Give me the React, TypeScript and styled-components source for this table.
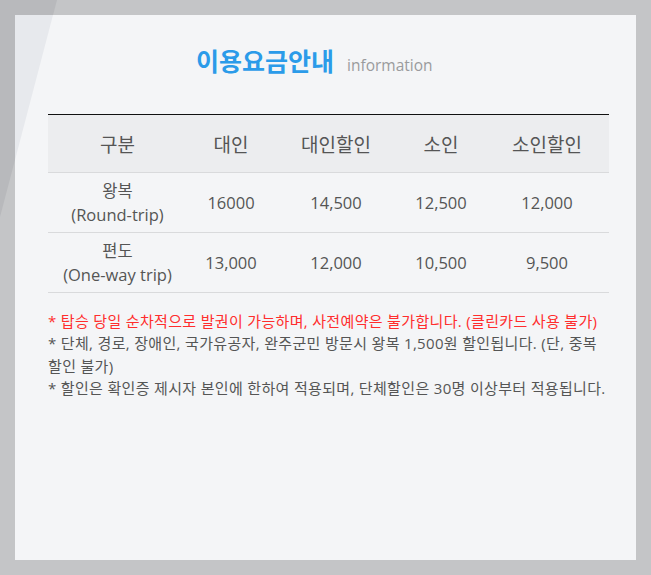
import React from "react";
import styled, { createGlobalStyle } from "styled-components";

const Global = createGlobalStyle`
  html, body { margin: 0; padding: 0; }
  body {
    background: #c4c5c7;
    font-family: "Open Sans", "Noto Sans CJK KR", sans-serif;
  }
`;

const Page = styled.div`
  position: relative;
  width: 651px;
  height: 575px;
  padding: 15px;
  box-sizing: border-box;
  background: #c4c5c7;

  &::before {
    content: "";
    position: absolute;
    left: 0;
    top: 0;
    width: 60px;
    height: 220px;
    background: #b8b9bc;
    clip-path: polygon(0 0, 57px 0, 0 217px);
  }
`;

const Card = styled.section`
  position: relative;
  width: 621px;
  height: 545px;
  background: #f4f5f7;
  box-sizing: border-box;
  padding: 28px 28px 0 33px;

  &::before {
    content: "";
    position: absolute;
    left: 0;
    top: 0;
    width: 40px;
    height: 146px;
    background: #e7e9ed;
    clip-path: polygon(0 0, 38px 0, 0 145px);
  }
`;

const TitleRow = styled.h2`
  margin: 0 0 32px 148px;
  display: flex;
  align-items: baseline;
  gap: 13px;
  font-weight: normal;
  line-height: 34px;
`;

const MainTitle = styled.span`
  font-family: "Noto Sans CJK KR", sans-serif;
  font-size: 25px;
  font-weight: 700;
  color: #2b9be9;
`;

const SubTitle = styled.span`
  font-size: 15.5px;
  color: #9a9b9d;
`;

const Table = styled.table`
  width: 561px;
  border-collapse: collapse;
  table-layout: fixed;
  border-top: 1px solid #111;
`;

const HeadCell = styled.th<{ $w: number }>`
  width: ${(p) => p.$w}px;
  height: 57px;
  padding: 0;
  background: #ecedef;
  border-bottom: 1px solid #d9dadc;
  font-weight: normal;
  font-size: 19px;
  color: #555;
  text-align: center;
  vertical-align: middle;
`;

const Cell = styled.td`
  height: 59px;
  padding: 0;
  border-bottom: 1px solid #d9dadc;
  font-size: 16.5px;
  line-height: 24px;
  color: #555;
  text-align: center;
  vertical-align: middle;
`;

const Notes = styled.ul`
  list-style: none;
  margin: 17px 0 0;
  padding: 0;
  width: 562px;
  font-size: 15px;
  letter-spacing: 0.33px;
  line-height: 22.3px;
  color: #555;
  word-break: keep-all;
`;

const Note = styled.li<{ $red?: boolean }>`
  color: ${(p) => (p.$red ? "#ff2d2d" : "#555")};
`;

const cols = [
  { label: "구분", w: 139 },
  { label: "대인", w: 88 },
  { label: "대인할인", w: 122 },
  { label: "소인", w: 88 },
  { label: "소인할인", w: 124 },
];

const rows = [
  { kind: "왕복", en: "(Round-trip)", vals: ["16000", "14,500", "12,500", "12,000"] },
  { kind: "편도", en: "(One-way trip)", vals: ["13,000", "12,000", "10,500", "9,500"] },
];

export default function App() {
  return (
    <>
      <Global />
      <Page>
        <Card>
          <TitleRow>
            <MainTitle>이용요금안내</MainTitle>
            <SubTitle>information</SubTitle>
          </TitleRow>
          <Table>
            <thead>
              <tr>
                {cols.map((c) => (
                  <HeadCell key={c.label} $w={c.w}>
                    {c.label}
                  </HeadCell>
                ))}
              </tr>
            </thead>
            <tbody>
              {rows.map((r) => (
                <tr key={r.kind}>
                  <Cell>
                    {r.kind}
                    <br />
                    {r.en}
                  </Cell>
                  {r.vals.map((v, i) => (
                    <Cell key={i}>{v}</Cell>
                  ))}
                </tr>
              ))}
            </tbody>
          </Table>
          <Notes>
            <Note $red>* 탑승 당일 순차적으로 발권이 가능하며, 사전예약은 불가합니다. (클린카드 사용 불가)</Note>
            <Note>* 단체, 경로, 장애인, 국가유공자, 완주군민 방문시 왕복 1,500원 할인됩니다. (단, 중복 할인 불가)</Note>
            <Note>* 할인은 확인증 제시자 본인에 한하여 적용되며, 단체할인은 30명 이상부터 적용됩니다.</Note>
          </Notes>
        </Card>
      </Page>
    </>
  );
}
